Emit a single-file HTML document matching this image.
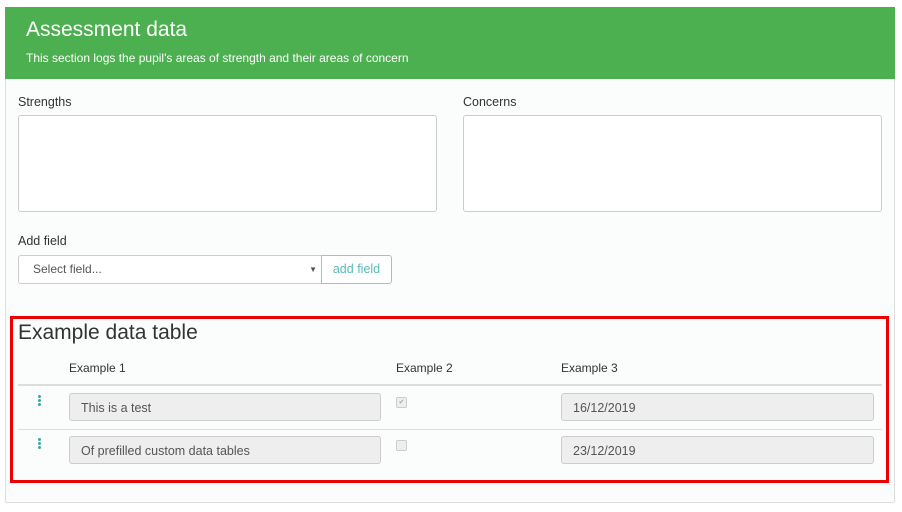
<!DOCTYPE html>
<html><head><style>
body{margin:0;width:902px;height:512px;background:#fff;font-family:"Liberation Sans",sans-serif;position:relative;overflow:hidden;color:#333}
.a{position:absolute}
.panel{left:5px;top:7px;width:888px;height:494px;border:1px solid #ddd;background:#fbfcfc;border-radius:2px}
.hdr{left:5px;top:7px;width:890px;height:72px;background:#4caf50}
.lbl{font-size:12.5px;color:#333}
.ta{background:#fff;border:1px solid #ccc;border-radius:3px}
.inp{background:#eee;border:1px solid #ccc;border-radius:3px;font-size:12.5px;color:#555;box-sizing:border-box;padding:7px 11px}
.cb{width:9px;height:9px;border:1px solid #ccc;border-radius:2px;background:#eee}
.dots{width:3px}
.dots i{display:block;width:3px;height:3px;border-radius:50%;background:#3aa8a8;margin-bottom:1px}
</style></head><body>
<div class="a panel"></div>
<div class="a hdr"></div>
<div class="a" style="left:26px;top:18px;font-size:21px;color:#fff">Assessment data</div>
<div class="a" style="left:26px;top:51px;font-size:12px;color:#fff">This section logs the pupil's areas of strength and their areas of concern</div>
<div class="a lbl" style="left:18px;top:95px">Strengths</div>
<div class="a lbl" style="left:463px;top:95px">Concerns</div>
<div class="a ta" style="left:18px;top:115px;width:417px;height:95px"></div>
<div class="a ta" style="left:463px;top:115px;width:417px;height:95px"></div>
<div class="a lbl" style="left:18px;top:234px">Add field</div>
<div class="a" style="left:18px;top:255px;width:302px;height:27px;border:1px solid #ccc;background:#fff;border-radius:3px 0 0 3px;font-size:12px;color:#555;line-height:27px;box-sizing:content-box"><span style="margin-left:14px">Select field...</span><span style="position:absolute;right:4px;font-size:8px">▼</span></div>
<div class="a" style="left:321px;top:255px;width:69px;height:27px;border:1px solid #8cc;border-radius:0 3px 3px 0;background:#fff;color:#5bb;font-size:12.5px;line-height:27px;text-align:center">add field</div>
<div class="a" style="left:10px;top:316px;width:873px;height:161px;border:3px solid #e00"></div>
<div class="a" style="left:18px;top:321px;font-size:21px;color:#333">Example data table</div>
<div class="a lbl" style="left:69px;top:361px;font-size:12px">Example 1</div>
<div class="a lbl" style="left:396px;top:361px;font-size:12px">Example 2</div>
<div class="a lbl" style="left:561px;top:361px;font-size:12px">Example 3</div>
<div class="a" style="left:18px;top:384px;width:864px;height:2px;background:#ddd"></div>
<div class="a" style="left:18px;top:429px;width:864px;height:1px;background:#ddd"></div>
<div class="a dots" style="left:38px;top:395px"><i></i><i></i><i></i></div>
<div class="a dots" style="left:38px;top:438px"><i></i><i></i><i></i></div>
<div class="a inp" style="left:69px;top:393px;width:312px;height:28px">This is a test</div>
<div class="a inp" style="left:69px;top:436px;width:312px;height:28px">Of prefilled custom data tables</div>
<div class="a inp" style="left:561px;top:393px;width:313px;height:28px">16/12/2019</div>
<div class="a inp" style="left:561px;top:436px;width:313px;height:28px">23/12/2019</div>
<div class="a cb" style="left:396px;top:397px;font-size:7px;color:#aaa;line-height:9px;text-align:center">✔</div>
<div class="a cb" style="left:396px;top:440px"></div>
</body></html>
